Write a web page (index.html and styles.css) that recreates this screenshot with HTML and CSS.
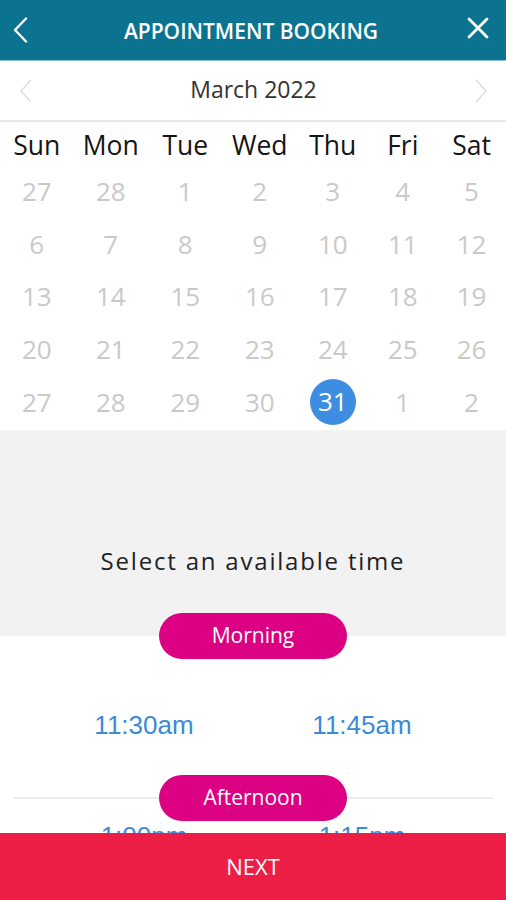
FILE: index.html
```html
<!DOCTYPE html>
<html lang="en">
<head>
<meta charset="utf-8">
<title>Appointment Booking</title>
<link rel="stylesheet" href="styles.css">
</head>
<body>
<div class="app">
  <header class="topbar">
    <button class="icon-btn back" aria-label="Back">
      <svg width="16" height="26" viewBox="0 0 16 26"><polyline points="13,1.5 2,13 13,24.5" fill="none" stroke="#fff" stroke-width="2.4" stroke-linecap="round" stroke-linejoin="round"/></svg>
    </button>
    <h1 class="title">APPOINTMENT BOOKING</h1>
    <button class="icon-btn close" aria-label="Close">
      <svg width="22" height="22" viewBox="0 0 22 22"><path d="M2 2 L20 20 M20 2 L2 20" fill="none" stroke="#fff" stroke-width="2.8" stroke-linecap="round"/></svg>
    </button>
  </header>

  <div class="monthbar">
    <span class="chev">
      <svg width="16" height="26" viewBox="0 0 16 26"><polyline points="13,2 3,13 13,24" fill="none" stroke="#dedede" stroke-width="1.6"/></svg>
    </span>
    <span class="month">March 2022</span>
    <span class="chev">
      <svg width="16" height="26" viewBox="0 0 16 26"><polyline points="3,2 13,13 3,24" fill="none" stroke="#dedede" stroke-width="1.6"/></svg>
    </span>
  </div>

  <div class="calendar">
    <div class="weekdays">
      <span>Sun</span><span>Mon</span><span>Tue</span><span>Wed</span><span>Thu</span><span>Fri</span><span>Sat</span>
    </div>
    <div class="days">
      <span>27</span><span>28</span><span>1</span><span>2</span><span>3</span><span>4</span><span>5</span>
      <span>6</span><span>7</span><span>8</span><span>9</span><span>10</span><span>11</span><span>12</span>
      <span>13</span><span>14</span><span>15</span><span>16</span><span>17</span><span>18</span><span>19</span>
      <span>20</span><span>21</span><span>22</span><span>23</span><span>24</span><span>25</span><span>26</span>
      <span>27</span><span>28</span><span>29</span><span>30</span><span class="selected"><b>31</b></span><span>1</span><span>2</span>
    </div>
  </div>

  <div class="intro">
    <p class="prompt">Select an available time</p>
  </div>

  <section class="group morning">
    <div class="group-head"><span class="pill">Morning</span></div>
    <div class="times">
      <span class="time">11:30am</span>
      <span class="time">11:45am</span>
    </div>
  </section>

  <section class="group afternoon">
    <div class="group-head lined"><span class="pill">Afternoon</span></div>
    <div class="times tight">
      <span class="time">1:00pm</span>
      <span class="time">1:15pm</span>
    </div>
  </section>

  <button class="next">NEXT</button>
</div>
</body>
</html>
```

FILE: styles.css
```css
* { box-sizing: border-box; }
html, body { margin: 0; padding: 0; }
body {
  font-family: "Open Sans", "Noto Sans", sans-serif;
  background: #fff;
  color: #222;
  width: 506px;
  height: 900px;
  overflow: hidden;
}
.app { position: relative; width: 506px; height: 900px; overflow: hidden; }

.topbar {
  height: 61px;
  background: #0b7390;
  border-bottom: 1px solid #86c0d1;
  display: grid;
  grid-template-columns: 1fr auto 1fr;
  align-items: center;
  padding: 0 17px 0 13px;
}
.icon-btn {
  background: none; border: 0; padding: 0; margin: 0;
  display: flex; align-items: center;
}
.icon-btn.back { justify-self: start; }
.icon-btn.close { justify-self: end; margin-bottom: 5px; }
.title {
  margin: 0;
  color: #fff;
  font-size: 21px;
  font-weight: 600;
  letter-spacing: 0;
  line-height: 1;
  padding-top: 2px;
  text-align: center;
}

.monthbar {
  height: 61px;
  border-bottom: 2px solid #e9e9e9;
  display: flex;
  align-items: center;
  justify-content: space-between;
  padding: 0 17px 0 18px;
}
.chev { display: flex; }
.month {
  font-size: 23px;
  color: #333;
  line-height: 1;
  padding-bottom: 2px;
}

.calendar { padding-bottom: 2px; }
.weekdays, .days {
  display: grid;
  grid-template-columns: 73.5px 74.5px 74.5px 74.5px 71.5px 68.5px 69px;
}
.weekdays { height: 43px; padding-top: 4px; align-items: center; }
.weekdays span {
  text-align: center;
  font-size: 26.5px;
  color: #151515;
  line-height: 1;
}
.days { grid-auto-rows: 52.6px; align-items: center; }
.days span {
  text-align: center;
  font-size: 26px;
  color: #c9c9c9;
  line-height: 1;
  display: flex;
  justify-content: center;
  align-items: center;
}
.days .selected b {
  font-weight: 400;
  color: #fff;
  background: #3d8ee0;
  width: 46px;
  height: 46px;
  border-radius: 50%;
  display: flex;
  align-items: center;
  justify-content: center;
  padding-bottom: 1px;
}

.intro {
  background: #f2f2f2;
  height: 206px;
  padding-top: 116px;
}
.prompt {
  margin: 0;
  text-align: center;
  font-size: 24px;
  letter-spacing: 1.8px;
  color: #222;
  line-height: 30px;
}

.group-head {
  display: flex;
  justify-content: center;
  margin-top: -23px;
  position: relative;
}
.group-head.lined::before {
  content: "";
  position: absolute;
  left: 14px; right: 13px;
  top: 22px;
  height: 2px;
  background: #ececec;
}
.pill {
  position: relative;
  width: 188px;
  height: 46px;
  border-radius: 23px;
  background: #dc0082;
  color: #fff;
  font-size: 21px;
  font-weight: 500;
  display: flex;
  align-items: center;
  justify-content: center;
  padding-bottom: 1px;
}
.afternoon .group-head { margin-top: 35px; }

.times {
  display: grid;
  grid-template-columns: 1fr 1fr;
  padding: 51px 35px 0;
}
.times.tight { padding-top: 0; }
.time {
  text-align: center;
  font-family: "Liberation Sans", Arial, sans-serif;
  font-size: 26px;
  line-height: 30px;
  color: #3b8ad9;
}

.next {
  position: absolute;
  left: 0; right: 0; bottom: 0;
  height: 67px;
  border: 0;
  background: #ec1e45;
  color: #fff;
  font-family: "Open Sans", sans-serif;
  font-size: 22px;
  letter-spacing: 0;
  padding: 0 0 2px;
}
```
